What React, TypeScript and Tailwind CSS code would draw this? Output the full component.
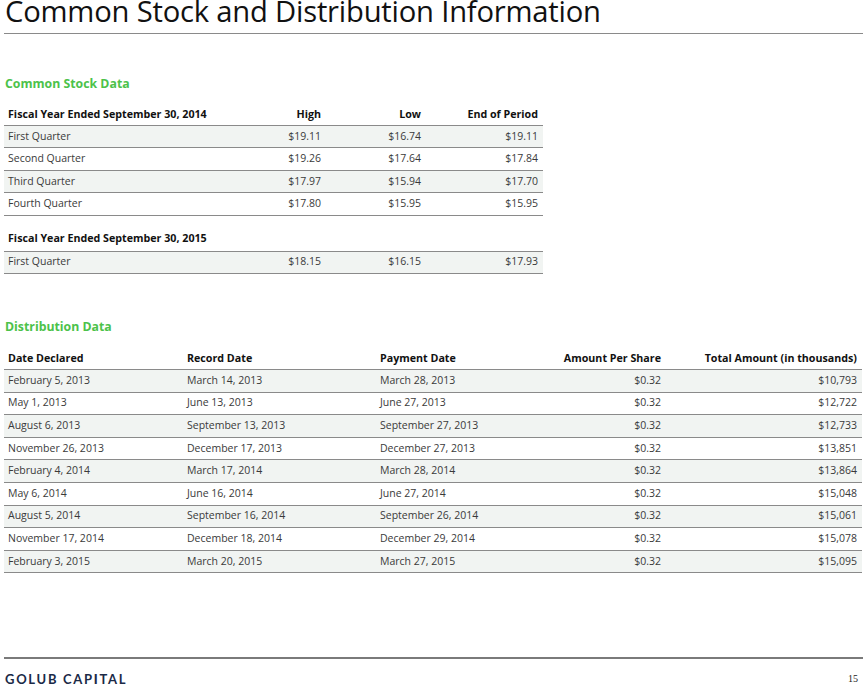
import React from "react";

const stock2014 = [
  ["First Quarter", "$19.11", "$16.74", "$19.11"],
  ["Second Quarter", "$19.26", "$17.64", "$17.84"],
  ["Third Quarter", "$17.97", "$15.94", "$17.70"],
  ["Fourth Quarter", "$17.80", "$15.95", "$15.95"],
];
const stock2015 = [["First Quarter", "$18.15", "$16.15", "$17.93"]];

const dist = [
  ["February 5, 2013", "March 14, 2013", "March 28, 2013", "$0.32", "$10,793"],
  ["May 1, 2013", "June 13, 2013", "June 27, 2013", "$0.32", "$12,722"],
  ["August 6, 2013", "September 13, 2013", "September 27, 2013", "$0.32", "$12,733"],
  ["November 26, 2013", "December 17, 2013", "December 27, 2013", "$0.32", "$13,851"],
  ["February 4, 2014", "March 17, 2014", "March 28, 2014", "$0.32", "$13,864"],
  ["May 6, 2014", "June 16, 2014", "June 27, 2014", "$0.32", "$15,048"],
  ["August 5, 2014", "September 16, 2014", "September 26, 2014", "$0.32", "$15,061"],
  ["November 17, 2014", "December 18, 2014", "December 29, 2014", "$0.32", "$15,078"],
  ["February 3, 2015", "March 20, 2015", "March 27, 2015", "$0.32", "$15,095"],
];

function StockRows({ rows }: { rows: string[][] }) {
  return (
    <>
      {rows.map((r, i) => (
        <div
          key={i}
          className={`grid grid-cols-[221px_100px_100px_118px] h-[22.4px] items-center border-b border-[#8a8a8a] text-[#3a3a3a] ${
            i % 2 === 0 ? "bg-[#f1f4f2]" : "bg-white"
          }`}
        >
          <div className="pl-1">{r[0]}</div>
          <div className="text-right pr-1">{r[1]}</div>
          <div className="text-right pr-1">{r[2]}</div>
          <div className="text-right pr-[5px]">{r[3]}</div>
        </div>
      ))}
    </>
  );
}

export default function App() {
  return (
    <div
      className="w-[867px] h-[691px] bg-white relative overflow-hidden flex flex-col px-1"
      style={{ fontFamily: "'Open Sans', 'Noto Sans', sans-serif" }}
    >
      <h1 className="text-[29.2px] leading-[22px] text-[#111] pl-px tracking-[-0.2px] whitespace-nowrap">
        Common Stock and Distribution Information
      </h1>
      <div className="h-px bg-[#8a8a8a] mt-[11px]" />

      <div className="mt-[41px] text-[12.3px] font-bold text-[#4cc24a] leading-[18px] pl-px">
        Common Stock Data
      </div>

      <div className="w-[539px] mt-[11px] text-[10.5px]">
        <div className="grid grid-cols-[221px_100px_100px_118px] h-[22px] items-center border-b border-[#8a8a8a] font-bold text-[#111] text-[10.7px]">
          <div className="pl-1">Fiscal Year Ended September 30, 2014</div>
          <div className="text-right pr-1">High</div>
          <div className="text-right pr-1">Low</div>
          <div className="text-right pr-[5px]">End of Period</div>
        </div>
        <StockRows rows={stock2014} />
        <div className="h-[36px] flex items-end border-b border-[#8a8a8a] font-bold text-[#111] text-[10.7px]">
          <div className="pl-1 h-[22px] pb-[4px] flex items-center">Fiscal Year Ended September 30, 2015</div>
        </div>
        <StockRows rows={stock2015} />
      </div>

      <div className="mt-[44px] text-[12.3px] font-bold text-[#4cc24a] leading-[18px] pl-px">
        Distribution Data
      </div>

      <div className="w-[858px] mt-[12px] text-[10.5px]">
        <div className="grid grid-cols-[179px_193px_169px_120px_197px] h-[22px] items-center border-b border-[#8a8a8a] font-bold text-[#111] text-[10.7px]">
          <div className="pl-1">Date Declared</div>
          <div className="pl-1">Record Date</div>
          <div className="pl-1">Payment Date</div>
          <div className="text-right pr-1">Amount Per Share</div>
          <div className="text-right pr-[5px]">Total Amount (in thousands)</div>
        </div>
        {dist.map((r, i) => (
          <div
            key={i}
            className={`grid grid-cols-[179px_193px_169px_120px_197px] h-[22.6px] items-center border-b border-[#8a8a8a] text-[#3a3a3a] ${
              i % 2 === 0 ? "bg-[#f1f4f2]" : "bg-white"
            }`}
          >
            <div className="pl-1">{r[0]}</div>
            <div className="pl-1">{r[1]}</div>
            <div className="pl-1">{r[2]}</div>
            <div className="text-right pr-1">{r[3]}</div>
            <div className="text-right pr-[5px]">{r[4]}</div>
          </div>
        ))}
      </div>

      <div className="flex-1" />
      <div className="h-[2px] bg-[#7a7a7a]" />
      <div className="h-[32px] flex items-start justify-between pt-[12px]">
        <div
          className="text-[13px] leading-[16px] font-bold text-[#1b2a47] tracking-[1.7px] pl-px"
          style={{ fontFamily: "'Lato', 'Open Sans', sans-serif" }}
        >
          GOLUB CAP<span className="font-black">I</span>TAL
        </div>
        <div
          className="text-[10px] leading-[16px] text-[#222] pr-[5px]"
          style={{ fontFamily: "'Liberation Serif', serif" }}
        >
          15
        </div>
      </div>
    </div>
  );
}
